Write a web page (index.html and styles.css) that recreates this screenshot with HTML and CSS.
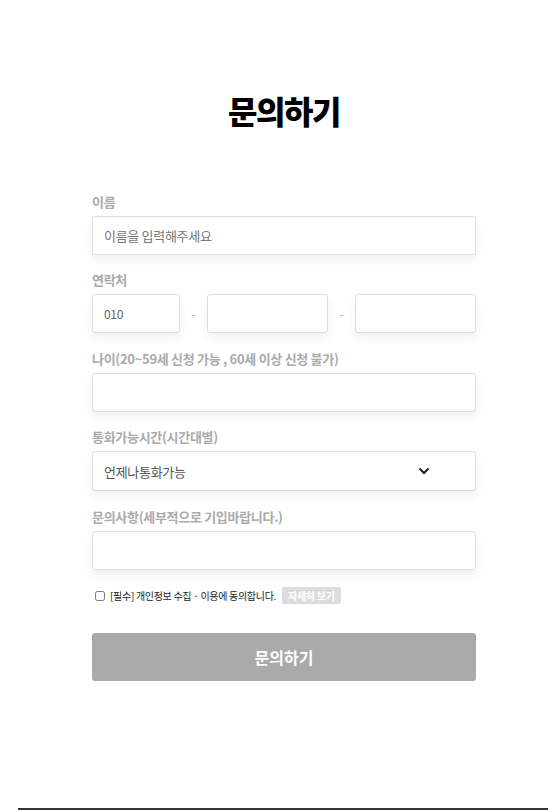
FILE: index.html
```html
<!DOCTYPE html>
<html>
<head>
  <title>문의하기</title>
  <link rel="stylesheet" href="styles.css">
</head>
<body>
  <div class="wrap">
    <div class="page">
      <h1 class="title">문의하기</h1>

      <form class="form">
        <div class="group">
          <label class="label">이름</label>
          <input class="field" type="text" placeholder="이름을 입력해주세요">
        </div>

        <div class="group">
          <label class="label">연락처</label>
          <div class="phone">
            <input class="field short" type="text" value="010">
            <span class="dash">-</span>
            <input class="field" type="text">
            <span class="dash">-</span>
            <input class="field" type="text">
          </div>
        </div>

        <div class="group">
          <label class="label">나이(20~59세 신청 가능 , 60세 이상 신청 불가)</label>
          <input class="field" type="text">
        </div>

        <div class="group">
          <label class="label">통화가능시간(시간대별)</label>
          <div class="select">
            <span>언제나통화가능</span>
            <svg width="12" height="8" viewBox="0 0 12 8"><path d="M1.5 1.5 L6 6 L10.5 1.5" fill="none" stroke="#222" stroke-width="2"/></svg>
          </div>
        </div>

        <div class="group">
          <label class="label">문의사항(세부적으로 기입바랍니다.)</label>
          <input class="field" type="text">
        </div>

        <div class="agree">
          <input type="checkbox" class="check">
          <span>[필수] 개인정보 수집 · 이용에 동의합니다.</span>
          <span class="more">자세히 보기</span>
        </div>

        <button type="button" class="submit">문의하기</button>
      </form>
    </div>
  </div>
  <div class="footer-line"></div>
</body>
</html>
```

FILE: styles.css
```css
body {
  margin: 0;
  background: #fff;
  font-family: "Noto Sans CJK KR", "Noto Sans", sans-serif;
}
.wrap {
  padding-left: 20px;
}
.page {
  width: 384px;
  margin: 0 auto;
  padding-top: 89px;
  height: 719px;
}
.title {
  margin: 0 0 62px;
  text-align: center;
  font-size: 32px;
  font-weight: 900;
  line-height: 42px;
  letter-spacing: -1.5px;
  color: #000;
}
.form {
  display: flex;
  flex-direction: column;
}
.group {
  display: flex;
  flex-direction: column;
  margin-bottom: 16px;
}
.group:nth-child(3),
.group:nth-child(5) {
  margin-top: 1px;
}
.label {
  font-size: 13px;
  font-weight: 700;
  line-height: 18px;
  color: #aaa;
  margin-bottom: 5px;
  letter-spacing: -0.3px;
}
.field {
  box-sizing: border-box;
  height: 39px;
  width: 100%;
  border: 1px solid #ddd;
  border-radius: 3px;
  padding: 0 11px;
  font-family: inherit;
  font-size: 13px;
  letter-spacing: -0.3px;
  color: #666;
  box-shadow: 0 5px 8px rgba(0, 0, 0, 0.06);
  outline: none;
}
.field::placeholder {
  color: #777;
}
.phone {
  display: flex;
  align-items: center;
}
.phone .field {
  flex: 0 0 121px;
  font-size: 12px;
}
.phone .field.short {
  flex: 0 0 88px;
}
.dash {
  flex: 1;
  text-align: center;
  font-size: 12px;
  color: #aaa;
}
.select {
  box-sizing: border-box;
  height: 40px;
  border: 1px solid #ddd;
  border-radius: 3px;
  padding: 0 45px 0 11px;
  display: flex;
  align-items: center;
  justify-content: space-between;
  font-size: 13px;
  letter-spacing: -0.3px;
  color: #555;
  box-shadow: 0 5px 8px rgba(0, 0, 0, 0.06);
}
.agree {
  display: flex;
  align-items: center;
  gap: 5px;
  font-size: 10px;
  color: #222;
  letter-spacing: -0.3px;
  margin-top: 1px;
  padding-left: 3px;
}
.check {
  margin: 0;
  width: 10px;
  height: 10px;
}
.more {
  margin-left: 1px;
  background: #ddd;
  color: #fff;
  font-weight: 700;
  padding: 1px 6px;
  border-radius: 2px;
  line-height: 15px;
}
.submit {
  margin-top: 29px;
  height: 48px;
  border: none;
  border-radius: 3px;
  background: #aaa;
  color: #fff;
  font-family: inherit;
  font-size: 16px;
  font-weight: 700;
}
.footer-line {
  margin-left: 18px;
  height: 2px;
  background: #333;
}
```
